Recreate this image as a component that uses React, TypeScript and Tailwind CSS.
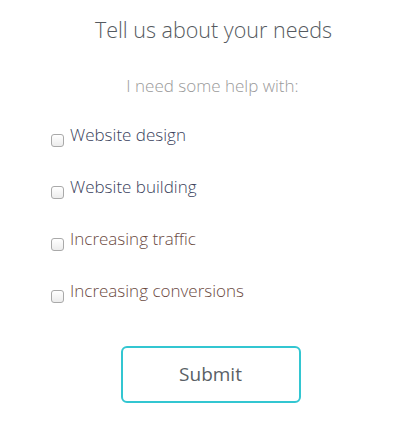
const options = [
  { label: 'Website design', color: 'text-[#3a3f5c]' },
  { label: 'Website building', color: 'text-[#3a3f5c]' },
  { label: 'Increasing traffic', color: 'text-[#6b4a3f]' },
  { label: 'Increasing conversions', color: 'text-[#6b4a3f]' },
];

export default function App() {
  return (
    <div className="w-[417px] h-[422px] bg-white font-['Open_Sans',sans-serif]">
      <div className="pt-[14px] flex flex-col">
        <h1 className="pl-[10px] text-center text-[21.5px] font-light text-[#555a60] leading-[32px]">
          Tell us about your needs
        </h1>
        <p className="mt-[28px] pl-[8px] text-center text-[17px] font-light text-[#9a9a9a] leading-[24px]">
          I need some help with:
        </p>
        <div className="mt-[25px] pl-[51px] flex flex-col gap-[28px]">
          {options.map((o) => (
            <label key={o.label} className="flex items-end gap-[6px] h-[24px]">
              <span className="w-[13px] h-[13px] mb-[0px] rounded-[3px] border border-[#a9a9a9] bg-gradient-to-b from-white to-[#ececec] shrink-0" />
              <span className={`text-[17px] font-light leading-[24px] ${o.color}`}>{o.label}</span>
            </label>
          ))}
        </div>
        <div className="mt-[43px] flex justify-center">
          <button className="ml-[4px] w-[180px] h-[57px] rounded-[6px] border-2 border-[#33c6d1] text-[19px] text-[#5a5f66] bg-white">
            Submit
          </button>
        </div>
      </div>
    </div>
  );
}
